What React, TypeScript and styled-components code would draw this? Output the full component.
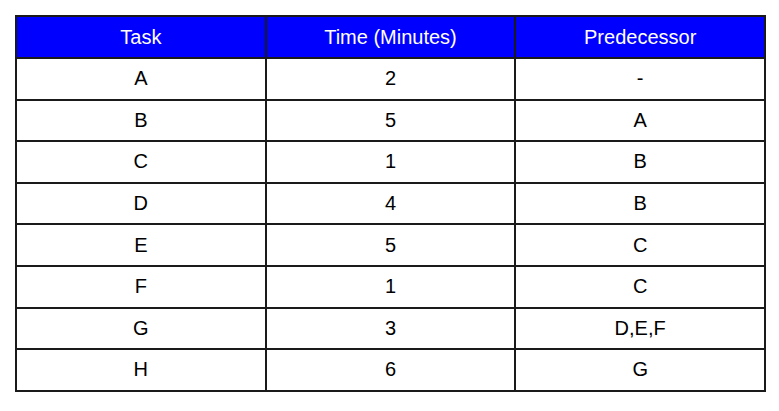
import React from 'react';
import styled, { createGlobalStyle } from 'styled-components';

const GlobalStyle = createGlobalStyle`
  html, body {
    margin: 0;
    padding: 0;
    background: #ffffff;
  }
`;

const Page = styled.div`
  padding: 15px;
  font-family: "Liberation Sans", Arial, sans-serif;
`;

const Table = styled.table`
  width: 751px;
  border-collapse: collapse;
  table-layout: fixed;
  border: 2px solid #1a1a1a;
`;

const HeadCell = styled.th`
  background: #0000ff;
  color: #ffffff;
  font-weight: normal;
  font-size: 20px;
  height: 40px;
  padding: 0;
  text-align: center;
  border: 2px solid #1a1a1a;
`;

const Cell = styled.td`
  color: #000000;
  font-size: 20px;
  height: 39.6px;
  padding: 0;
  text-align: center;
  border: 2px solid #1a1a1a;
`;

const rows = [
  { task: 'A', time: 2, pred: '-' },
  { task: 'B', time: 5, pred: 'A' },
  { task: 'C', time: 1, pred: 'B' },
  { task: 'D', time: 4, pred: 'B' },
  { task: 'E', time: 5, pred: 'C' },
  { task: 'F', time: 1, pred: 'C' },
  { task: 'G', time: 3, pred: 'D,E,F' },
  { task: 'H', time: 6, pred: 'G' },
];

const App: React.FC = () => {
  return (
    <Page>
      <GlobalStyle />
      <Table>
        <thead>
          <tr>
            <HeadCell>Task</HeadCell>
            <HeadCell>Time (Minutes)</HeadCell>
            <HeadCell>Predecessor</HeadCell>
          </tr>
        </thead>
        <tbody>
          {rows.map((r) => (
            <tr key={r.task}>
              <Cell>{r.task}</Cell>
              <Cell>{r.time}</Cell>
              <Cell>{r.pred}</Cell>
            </tr>
          ))}
        </tbody>
      </Table>
    </Page>
  );
};

export default App;
